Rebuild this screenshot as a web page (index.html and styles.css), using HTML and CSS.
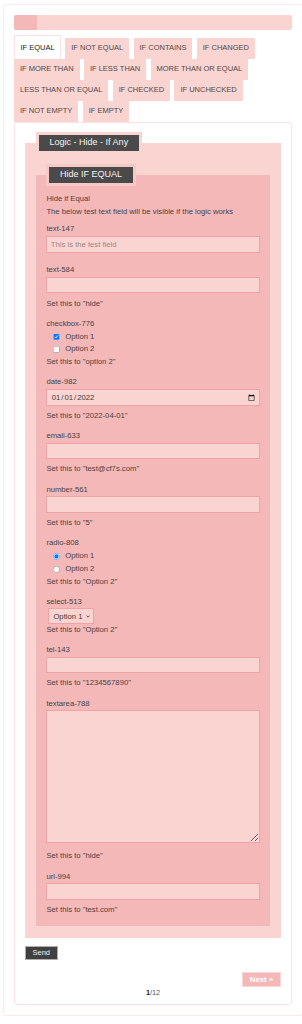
FILE: index.html
```html
<!DOCTYPE html>
<html lang="en">
<head>
    <meta charset="UTF-8">
    <meta name="viewport" content="width=device-width, initial-scale=1.0">
    <title>Conditional Fields - IF EQUAL</title>
    <link rel="stylesheet" href="styles.css">
</head>
<body>
    <div class="wrap">
        <div class="progress">
            <div class="progress-fill" style="width: 8.33%;"></div>
        </div>

        <div class="tabs">
            <span class="tab is-active">IF EQUAL</span>
            <span class="tab">IF NOT EQUAL</span>
            <span class="tab">IF CONTAINS</span>
            <span class="tab">IF CHANGED</span>
            <span class="tab">IF MORE THAN</span>
            <span class="tab">IF LESS THAN</span>
            <span class="tab">MORE THAN OR EQUAL</span>
            <span class="tab">LESS THAN OR EQUAL</span>
            <span class="tab">IF CHECKED</span>
            <span class="tab">IF UNCHECKED</span>
            <span class="tab">IF NOT EMPTY</span>
            <span class="tab">IF EMPTY</span>
        </div>

        <form class="panel" onsubmit="return false;">
            <fieldset class="group">
                <legend>Logic - Hide - If Any</legend>

                <fieldset class="group group-inner">
                    <legend>Hide IF EQUAL</legend>

                    <p class="intro">Hide if Equal<br>The below test text field will be visible if the logic works</p>

                    <div class="field field-solo">
                        <label class="field-label" for="text-147">text-147</label>
                        <input class="field-input" id="text-147" type="text" placeholder="This is the test field">
                    </div>

                    <div class="field">
                        <label class="field-label" for="text-584">text-584</label>
                        <input class="field-input" id="text-584" type="text">
                        <p class="hint">Set this to "hide"</p>
                    </div>

                    <div class="field">
                        <span class="field-label">checkbox-776</span>
                        <label class="option"><input type="checkbox" checked> Option 1</label>
                        <label class="option"><input type="checkbox"> Option 2</label>
                        <p class="hint hint-tight">Set this to "option 2"</p>
                    </div>

                    <div class="field">
                        <label class="field-label" for="date-982">date-982</label>
                        <input class="field-input" id="date-982" type="date" value="2022-01-01">
                        <p class="hint">Set this to "2022-04-01"</p>
                    </div>

                    <div class="field">
                        <label class="field-label" for="email-633">email-633</label>
                        <input class="field-input" id="email-633" type="email">
                        <p class="hint">Set this to "test@cf7s.com"</p>
                    </div>

                    <div class="field">
                        <label class="field-label" for="number-561">number-561</label>
                        <input class="field-input" id="number-561" type="number">
                        <p class="hint">Set this to "5"</p>
                    </div>

                    <div class="field">
                        <span class="field-label">radio-808</span>
                        <label class="option"><input type="radio" name="radio-808" checked> Option 1</label>
                        <label class="option"><input type="radio" name="radio-808"> Option 2</label>
                        <p class="hint hint-tight">Set this to "Option 2"</p>
                    </div>

                    <div class="field">
                        <label class="field-label" for="select-513">select-513</label>
                        <div class="select-wrap">
                            <select class="field-select" id="select-513">
                                <option>Option 1</option>
                                <option>Option 2</option>
                            </select>
                            <svg class="select-arrow" viewBox="0 0 8 5" aria-hidden="true">
                                <path d="M1 1l3 3 3-3" fill="none" stroke="#3a3a3a" stroke-width="1.7"/>
                            </svg>
                        </div>
                        <p class="hint hint-tight">Set this to "Option 2"</p>
                    </div>

                    <div class="field">
                        <label class="field-label" for="tel-143">tel-143</label>
                        <input class="field-input" id="tel-143" type="tel">
                        <p class="hint">Set this to "1234567890"</p>
                    </div>

                    <div class="field">
                        <label class="field-label" for="textarea-788">textarea-788</label>
                        <textarea class="field-input field-area" id="textarea-788"></textarea>
                        <p class="hint hint-loose">Set this to "hide"</p>
                    </div>

                    <div class="field field-last">
                        <label class="field-label" for="url-994">url-994</label>
                        <input class="field-input" id="url-994" type="url">
                        <p class="hint">Set this to "test.com"</p>
                    </div>
                </fieldset>
            </fieldset>

            <button class="btn-send" type="submit">Send</button>

            <div class="pager">
                <button class="btn-next" type="button">Next &raquo;</button>
            </div>
            <p class="page-count"><b>1</b>/12</p>
        </form>
    </div>
</body>
</html>
```

FILE: styles.css
```css
* {
    box-sizing: border-box;
}

html {
    overflow-x: hidden;
}

body {
    margin: 0;
    font-family: "Liberation Sans", Arial, sans-serif;
    font-size: 7.7px;
    line-height: 12.8px;
    color: #474343;
    background: #fff;
}

p {
    margin: 0;
}

/* the page box runs just past the right edge of the window */
.wrap {
    margin: 4px -1px 0 3px;
    padding: 10px;
    border: 1px solid #fdeae8;
    border-radius: 3px;
}

/* progress */
.progress {
    height: 15.3px;
    background: #fad4d1;
    border-radius: 2px;
    overflow: hidden;
}

.progress-fill {
    height: 100%;
    background: #f5b8b9;
}

/* tabs */
.tabs {
    display: flex;
    flex-wrap: wrap;
    align-items: flex-end;
    column-gap: 4.3px;
    margin-top: 4.7px;
}

.tab {
    padding: 0 6px;
    font-size: 7.5px;
    line-height: 20.85px;
    background: #fad4d1;
    color: #4f4848;
}

.tab.is-active {
    padding: 2.3px 5.4px 0;
    background: #fff;
    color: #222;
    border: 1px solid #fbe2e0;
    border-bottom: 0;
}

/* panel */
.panel {
    display: block;
    padding: 9.8px 10px 4.3px;
    border: 1px solid #fce3e1;
    border-radius: 3px;
}

.group {
    margin: 0;
    min-width: 0;
    padding: 10px 11px 11.6px;
    border: 0;
    background: #fad4d1;
}

.group > legend {
    margin: 0;
    padding: 0 10.6px;
    font-size: 9px;
    line-height: 15.6px;
    color: #f4f4f4;
    background: #4a4a4a;
    border: 3px solid #fad4d1;
}

.group-inner {
    padding: 7.2px 10.4px 9.6px;
    background: #f5b8b9;
}

.group-inner > legend {
    border-color: #f8c7c6;
}

.intro {
    margin-bottom: 4.8px;
}

/* fields */
.field {
    margin-bottom: 7.35px;
}

.field-solo {
    margin-bottom: 11.6px;
}

.field-last {
    margin-bottom: 0;
}

.field-label {
    display: block;
}

.field-input {
    display: block;
    width: 100%;
    height: 16.5px;
    margin: 0;
    padding: 0 3.4px;
    font-family: inherit;
    font-size: 7.7px;
    color: #3a3a3a;
    background: #fad4d1;
    border: 1px solid #eda4a6;
    border-radius: 0;
    outline: none;
}

.field-input::placeholder {
    color: #9a8888;
}

.field-input::-webkit-calendar-picker-indicator {
    width: 7px;
    height: 7px;
    margin: 0;
    padding: 0;
}

.field-area {
    height: 133px;
    padding: 3px;
    resize: vertical;
}

.select-wrap {
    position: relative;
    width: 46.4px;
    margin-left: 1.6px;
}

.field-select {
    display: block;
    width: 100%;
    height: 15.4px;
    margin: 0;
    padding: 0 0 0 4.4px;
    font-family: inherit;
    font-size: 7.7px;
    color: #3a3a3a;
    background: #fad4d1;
    border: 1px solid #eda4a6;
    border-radius: 0;
    appearance: none;
    -webkit-appearance: none;
}

.select-arrow {
    position: absolute;
    top: 6.3px;
    right: 4.6px;
    width: 4.2px;
    height: 2.8px;
    pointer-events: none;
}

.option {
    display: flex;
    align-items: center;
    gap: 5.6px;
    padding-left: 6.6px;
}

.option input {
    zoom: 0.52;
    margin: 0;
}

.hint {
    margin-top: 4.2px;
}

.hint-tight {
    margin-top: 0;
}

.hint-loose {
    margin-top: 7px;
}

/* actions */
.btn-send {
    display: block;
    height: 14.3px;
    margin-top: 7.7px;
    padding: 0 6.5px;
    font-family: inherit;
    font-size: 7.5px;
    color: #f2f2f2;
    background: #404040;
    border: 1px solid #b4aaaa;
    border-radius: 0;
    cursor: pointer;
}

.pager {
    display: flex;
    justify-content: flex-end;
    margin-top: 12px;
}

.btn-next {
    height: 14.7px;
    padding: 0 6.8px;
    font-family: inherit;
    font-size: 7.8px;
    font-weight: bold;
    color: #fff;
    background: #f5b8b9;
    border: 1px solid #fbd6d4;
    border-radius: 0;
    cursor: pointer;
}

.page-count {
    text-align: center;
    font-size: 7.3px;
    color: #555;
}

.page-count b {
    color: #222;
}
```
